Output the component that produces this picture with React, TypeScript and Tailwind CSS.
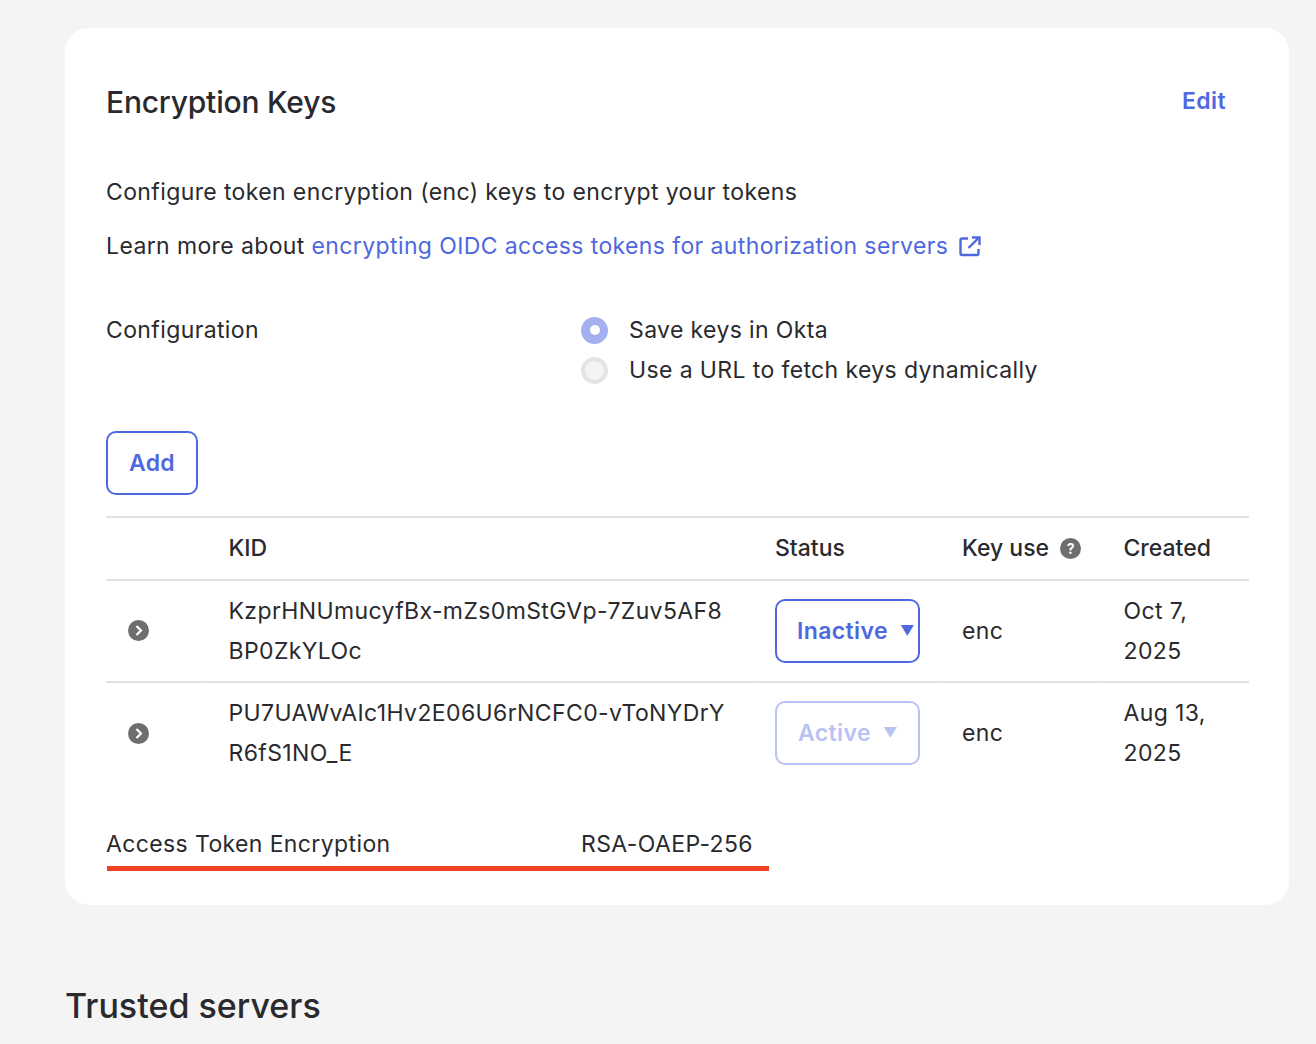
const keys = [
  {
    id: "KzprHNUmucyfBx-mZs0mStGVp-7Zuv5AF8BP0ZkYLOc",
    first: "KzprHNUmucyfBx-mZs0mStGVp-7Zuv5AF8",
    second: "BP0ZkYLOc",
    status: "Inactive",
    created: ["Oct 7,", "2025"],
  },
  {
    id: "PU7UAWvAIc1Hv2E06U6rNCFC0-vToNYDrYR6fS1NO_E",
    first: "PU7UAWvAIc1Hv2E06U6rNCFC0-vToNYDrY",
    second: "R6fS1NO_E",
    status: "Active",
    created: ["Aug 13,", "2025"],
  },
]

function ExternalIcon() {
  return (
    <svg className="ml-[11px] inline-block h-[22px] w-[22px] align-[-3px]" viewBox="0 0 22 22" fill="none" stroke="#4e68e0" strokeWidth="2.4">
      <path d="M9 3.500H3A1.500 1.500 0 0 0 1.500 5v13.500A1.500 1.500 0 0 0 3 20h15a1.500 1.500 0 0 0 1.500-1.500V14" />
      <path d="M9.500 13 19 3.500" />
      <path d="M13 2.500h7.500V10" />
    </svg>
  )
}

function ExpandIcon() {
  return (
    <svg className="h-[21px] w-[21px]" viewBox="0 0 21 21">
      <circle cx="10.500" cy="10.500" r="10.500" fill="#6e6e6e" />
      <path d="M8.500 6 13 10.500 8.500 15" fill="none" stroke="#fff" strokeWidth="2.200" />
    </svg>
  )
}

function StatusButton({ status }: { status: string }) {
  const active = status === "Active"
  return (
    <div
      className={
        active
          ? "flex h-[64px] w-[145px] items-center rounded-[10px] border-2 border-[#b9c3f3] pl-[21px] font-semibold text-[#b9c3f3]"
          : "flex h-[64px] w-[145px] items-center rounded-[10px] border-2 border-[#4e68e0] pl-[20px] font-semibold text-[#4e68e0]"
      }
    >
      <span>{status}</span>
      <span className="mb-[2px] ml-[12px] text-[14px]">▼</span>
    </div>
  )
}

export default function App() {
  return (
    <div className="h-[1044px] overflow-hidden bg-[#f4f4f4] pl-[65px] pr-[27px] pt-[28px] font-['Inter',sans-serif] text-[23px] tracking-[0.38px] text-[#2a2a2e]">
      <div className="h-[877px] rounded-[24px] bg-white pl-[41px] pr-[40px] pt-[55px]">
        <div className="flex items-start justify-between pr-[23px]">
          <h2 className="text-[30px] font-medium leading-[38px] tracking-[-0.2px]">Encryption Keys</h2>
          <a className="mt-[1px] font-semibold leading-[34px] text-[#4e68e0]">Edit</a>
        </div>
        <p className="mt-[51px] leading-[40px]">Configure token encryption (enc) keys to encrypt your tokens</p>
        <p className="mt-[14px] leading-[40px]">
          Learn more about <a className="text-[#4e68e0]">encrypting OIDC access tokens for authorization servers</a>
          <ExternalIcon />
        </p>
        <div className="mt-[44px] flex">
          <div className="w-[475px] leading-[40px]">Configuration</div>
          <div>
            <label className="flex h-[40px] items-center gap-[21px]">
              <span className="flex h-[27px] w-[27px] items-center justify-center rounded-full bg-[#a4b0f0]">
                <span className="h-[10px] w-[10px] rounded-full bg-white" />
              </span>
              Save keys in Okta
            </label>
            <label className="flex h-[40px] items-center gap-[21px]">
              <span className="flex h-[27px] w-[27px] items-center justify-center rounded-full border-[4px] border-[#e4e4e4] bg-[#f4f4f4]" />
              Use a URL to fetch keys dynamically
            </label>
          </div>
        </div>
        <button className="mt-[41px] h-[64px] w-[92px] rounded-[10px] border-2 border-[#4e68e0] font-semibold text-[#4e68e0]">Add</button>
        <table className="mt-[21px] w-full table-fixed border-separate border-spacing-0">
          <colgroup>
            <col className="w-[101px]" />
            <col className="w-[547px]" />
            <col className="w-[187px]" />
            <col className="w-[160px]" />
            <col />
          </colgroup>
          <thead>
            <tr className="h-[65px] text-left">
              <th className="border-y-2 border-[#e1e1e1]" />
              <th className="border-y-2 border-[#e1e1e1] pl-[21.500px] font-medium tracking-normal">KID</th>
              <th className="border-y-2 border-[#e1e1e1] pl-[21px] font-medium tracking-normal">Status</th>
              <th className="border-y-2 border-[#e1e1e1] pl-[21px] font-medium tracking-normal">
                <span className="inline-flex items-center gap-[11px]">
                  Key use
                  <span className="flex h-[21px] w-[21px] items-center justify-center rounded-full bg-[#6e6e6e] text-[14px] font-bold leading-none text-white">?</span>
                </span>
              </th>
              <th className="border-y-2 border-[#e1e1e1] pl-[22.500px] font-medium tracking-normal">Created</th>
            </tr>
          </thead>
          <tbody>
            {keys.map((k, i) => {
              // first row's bottom rule has small notches where the cells meet
              const cell = i === 0 ? "border-b-2 border-b-[#e1e1e1] border-r border-r-white" : ""
              return (
                <tr className={i === 0 ? "h-[102px]" : "h-[100px]"} key={k.id}>
                  <td className={i === 0 ? `pb-[2px] pl-[22px] align-middle ${cell}` : "pl-[22px] align-middle"}>
                    <ExpandIcon />
                  </td>
                  <td className={`pl-[21.500px] leading-[40px] ${cell}`}>
                    <div>{k.first}</div>
                    <div>{k.second}</div>
                  </td>
                  <td className={`pl-[21px] ${cell}`}>
                    <StatusButton status={k.status} />
                  </td>
                  <td className={`pl-[21px] ${cell}`}>enc</td>
                  <td className={i === 0 ? "border-b-2 border-b-[#e1e1e1] pl-[22.500px] leading-[40px]" : "pl-[22.500px] leading-[40px]"}>
                    <div>{k.created[0]}</div>
                    <div>{k.created[1]}</div>
                  </td>
                </tr>
              )
            })}
          </tbody>
        </table>
        <div className="mt-[41px] flex leading-[40px]">
          <div className="w-[475px]">Access Token Encryption</div>
          <div>RSA-OAEP-256</div>
        </div>
        <div className="ml-[1px] mt-[2px] h-[5px] w-[662px] bg-[#f04326]" />
      </div>
      <h2 className="mt-[76px] text-[34px] font-medium leading-[50px] tracking-normal">Trusted servers</h2>
    </div>
  )
}
